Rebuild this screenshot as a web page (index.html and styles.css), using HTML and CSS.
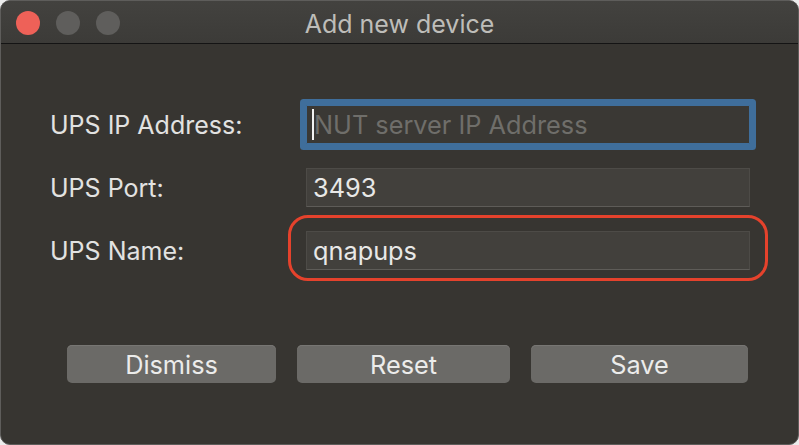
FILE: index.html
```html
<!DOCTYPE html>
<html>
<head>
<meta charset="utf-8">
<link rel="stylesheet" href="styles.css">
</head>
<body>
<div class="window">
  <div class="titlebar">
    <div class="lights">
      <span class="light close"></span>
      <span class="light"></span>
      <span class="light"></span>
    </div>
    <div class="title">Add new device</div>
    <div></div>
  </div>
  <div class="content">
    <div class="form">
      <div class="label">UPS IP Address:</div>
      <div class="field focused"><span class="caret"></span><span class="placeholder">NUT server IP Address</span></div>
      <div class="label">UPS Port:</div>
      <div class="field">3493</div>
      <div class="label">UPS Name:</div>
      <div class="field-wrap">
        <div class="field">qnapups</div>
        <div class="highlight"></div>
      </div>
    </div>
    <div class="buttons">
      <button class="btn btn-dismiss">Dismiss</button>
      <button class="btn btn-reset">Reset</button>
      <button class="btn btn-save">Save</button>
    </div>
  </div>
</div>
</body>
</html>
```

FILE: styles.css
```css
html, body {
  margin: 0;
  padding: 0;
  background: #ececec;
}
body {
  font-family: Inter, "Liberation Sans", Arial, sans-serif;
}
.window {
  box-sizing: border-box;
  width: 799px;
  height: 445px;
  border: 1px solid #5e5d5b;
  border-radius: 10px;
  overflow: hidden;
  background: #373531;
  display: flex;
  flex-direction: column;
}
.titlebar {
  height: 42px;
  flex: none;
  background: linear-gradient(#43423f, #3c3b38);
  border-bottom: 1px solid #141414;
  display: grid;
  grid-template-columns: 1fr auto 1fr;
  align-items: center;
}
.lights {
  display: flex;
  gap: 16px;
  padding-left: 15px;
  padding-top: 2px;
}
.light {
  width: 24px;
  height: 24px;
  border-radius: 50%;
  background: #5f5e5c;
}
.light.close {
  background: #ee6158;
}
.title {
  font-size: 25px;
  color: #bebdb9;
  padding-top: 3px;
}
.content {
  flex: 1;
  padding: 61px 0 0 49px;
}
.form {
  display: grid;
  grid-template-columns: 256px 444px;
  grid-auto-rows: 39px;
  row-gap: 24px;
  align-items: center;
}
.label {
  font-size: 25px;
  color: #e2e2e1;
  padding-top: 1px;
}
.field {
  box-sizing: border-box;
  height: 39px;
  background: #42403c;
  border: 1px solid #4d4b47;
  border-bottom-color: #5e5c58;
  padding-left: 6px;
  font-size: 25.3px;
  color: #e8e8e7;
  display: flex;
  align-items: center;
}
.field.focused {
  background: #3a3834;
  border-color: #3f6e9b;
  border-radius: 1px;
  box-shadow: 0 0 0 6px #3f6e9b;
  padding-left: 5px;
}
.caret {
  width: 2px;
  height: 31px;
  background: #f2f2f2;
  flex: none;
}
.placeholder {
  color: #6f6e6a;
}
.field-wrap {
  position: relative;
}
.highlight {
  position: absolute;
  left: -18px;
  top: -16px;
  right: -18px;
  bottom: -11px;
  border: 3px solid #e5422c;
  border-radius: 20px;
  pointer-events: none;
}
.buttons {
  display: flex;
  gap: 21px;
  margin-top: 75px;
  padding-left: 17px;
}
.btn {
  height: 38px;
  border: none;
  border-radius: 5px;
  background: #6b6a67;
  box-shadow: inset 0 1px 0 #777673;
  color: #ececeb;
  font-family: Inter, "Liberation Sans", Arial, sans-serif;
  font-size: 25.3px;
  padding: 0;
}
.btn-dismiss { width: 209px; }
.btn-reset { width: 213px; }
.btn-save { width: 217px; }
```
